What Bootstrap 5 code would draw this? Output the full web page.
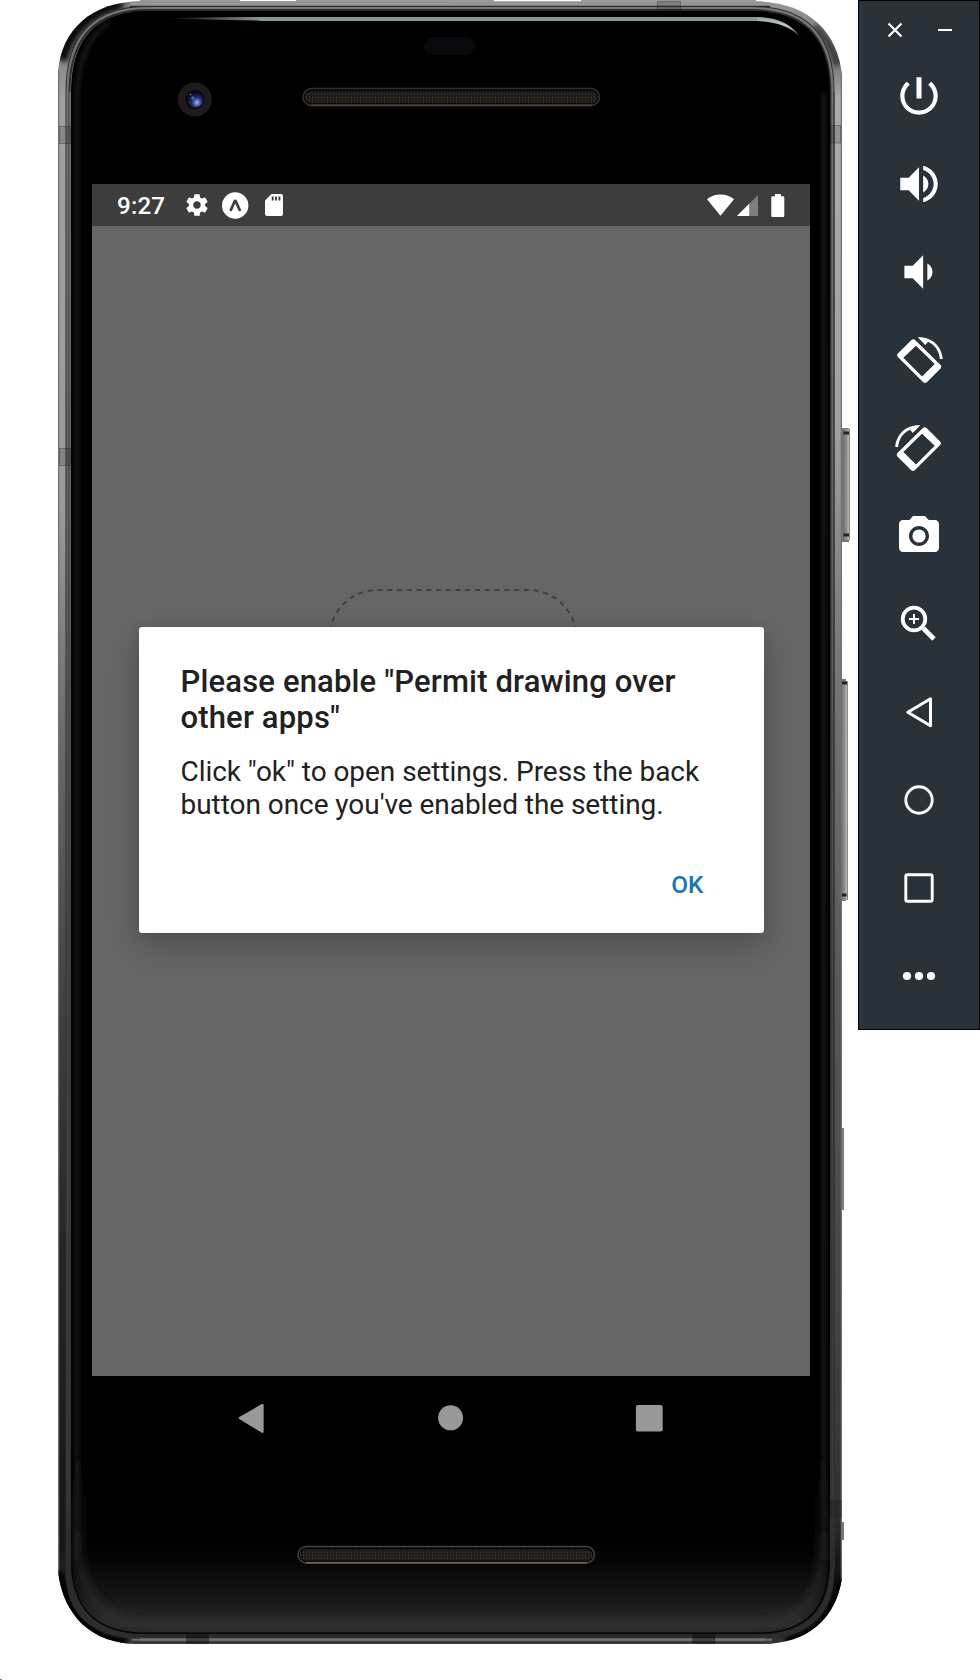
<!DOCTYPE html>
<html lang="en">
<head>
<meta charset="utf-8">
<meta name="viewport" content="width=device-width, initial-scale=1">
<title>Android Emulator</title>
<link href="https://cdn.jsdelivr.net/npm/bootstrap@5.3.0/dist/css/bootstrap.min.css" rel="stylesheet">
<style>
  body { font-family: Roboto, "Liberation Sans", sans-serif; background: #fff; width: 980px; height: 1680px; overflow: hidden; }
  svg { display: block; flex: none; }
  .device { width: 858px; height: 1680px; padding: 184px 48px 0 92px; }
  .device-art { z-index: 0; }
  .device-screen { width: 718px; height: 1192px; background: #666; z-index: 1; }
  .status-row { height: 42px; background: #3d3d3d; padding: 0 25px; z-index: 1; }
  .clock { width: 66.5px; font-size: 24.2px; font-weight: 500; line-height: 42px; letter-spacing: .15px; padding-top: 1px; }
  .icon-expo { margin-left: 12px; }
  .icon-sd { margin-left: 16.5px; }
  .icon-signal { margin-left: 3.5px; }
  .icon-battery { margin-left: 12.8px; }
  .drop-outline { left: 228px; top: 400px; }
  .dialog-area { z-index: 2; }
  .permit-dialog { width: 625px; height: 306px; padding: 37px 42px 34px; border-radius: 3px; color: #212121; box-shadow: 0 14px 36px rgba(0,0,0,.22), 0 2px 12px rgba(0,0,0,.1); }
  .permit-dialog h1 { font-size: 31px; line-height: 36.4px; font-weight: 500; margin-bottom: 19px; white-space: nowrap; letter-spacing: .16px; }
  .permit-dialog p { font-size: 28px; line-height: 32.8px; white-space: nowrap; letter-spacing: -.05px; }
  .btn-ok { font-size: 24.4px; line-height: 28px; font-weight: 500; color: #1a73b8; --bs-btn-padding-x: 18px; --bs-btn-padding-y: 0; }
  .nav-row { height: 84px; gap: 143.3px; z-index: 1; }
  .tool-panel { width: 122px; height: 1030px; background: #283238; border: 1px solid #000; }
  .window-row { height: 51px; padding-top: 7px; padding-left: 1px; gap: 30px; }
  .tool { height: 88px; }
</style>
</head>
<body>
<div class="d-flex align-items-start">
  <main class="device position-relative flex-shrink-0">
    <svg class="device-art position-absolute top-0 start-0" width="858" height="1680" viewBox="0 0 858 1680" aria-hidden="true">
      <defs>
        <linearGradient id="rimL" x1="0" y1="0" x2="0" y2="1644" gradientUnits="userSpaceOnUse">
          <stop offset="0" stop-color="#777"/><stop offset=".04" stop-color="#8a8a8a"/><stop offset=".06" stop-color="#a0a0a0"/><stop offset=".31" stop-color="#9a9a9a"/><stop offset=".45" stop-color="#6a6a6a"/><stop offset=".6" stop-color="#444"/><stop offset=".75" stop-color="#272727"/><stop offset=".94" stop-color="#161616"/><stop offset="1" stop-color="#444"/>
        </linearGradient>
        <linearGradient id="rimR" x1="0" y1="0" x2="0" y2="1644" gradientUnits="userSpaceOnUse">
          <stop offset="0" stop-color="#999"/><stop offset=".035" stop-color="#6d6d6d"/><stop offset=".06" stop-color="#aaa"/><stop offset=".25" stop-color="#a2a2a2"/><stop offset=".4" stop-color="#777"/><stop offset=".6" stop-color="#585858"/><stop offset=".8" stop-color="#444"/><stop offset=".92" stop-color="#303030"/><stop offset=".96" stop-color="#101010"/><stop offset="1" stop-color="#333"/>
        </linearGradient>
        <linearGradient id="chin" x1="0" y1="1535" x2="0" y2="1633" gradientUnits="userSpaceOnUse">
          <stop offset="0" stop-color="#000"/><stop offset=".3" stop-color="#060606"/><stop offset=".65" stop-color="#171717"/><stop offset=".92" stop-color="#2b2b2b"/><stop offset="1" stop-color="#1e1e1e"/>
        </linearGradient>
        <linearGradient id="glow" x1="0" y1="1440" x2="0" y2="1628" gradientUnits="userSpaceOnUse">
          <stop offset="0" stop-color="#222" stop-opacity="0"/><stop offset=".6" stop-color="#242424" stop-opacity=".7"/><stop offset="1" stop-color="#303030"/>
        </linearGradient>
        <linearGradient id="fadeIn" x1="165" y1="0" x2="260" y2="0" gradientUnits="userSpaceOnUse">
          <stop offset="0" stop-color="#8b9598" stop-opacity="0"/><stop offset="1" stop-color="#8b9598"/>
        </linearGradient>
        <linearGradient id="tail" x1="0" y1="17" x2="0" y2="38" gradientUnits="userSpaceOnUse">
          <stop offset="0" stop-color="#98a2a4"/><stop offset=".4" stop-color="#c3cccc"/><stop offset="1" stop-color="#444"/>
        </linearGradient>
        <linearGradient id="topBar" x1="0" y1="1" x2="0" y2="12" gradientUnits="userSpaceOnUse">
          <stop offset="0" stop-color="#888"/><stop offset=".3" stop-color="#9b9b9b"/><stop offset=".42" stop-color="#777"/><stop offset=".46" stop-color="#111"/><stop offset=".56" stop-color="#444"/><stop offset=".75" stop-color="#777"/><stop offset=".9" stop-color="#333"/><stop offset="1" stop-color="#000"/>
        </linearGradient>
        <linearGradient id="bottomBar" x1="0" y1="1633" x2="0" y2="1644" gradientUnits="userSpaceOnUse">
          <stop offset="0" stop-color="#000"/><stop offset=".12" stop-color="#2a2a2a"/><stop offset=".35" stop-color="#222"/><stop offset=".45" stop-color="#777"/><stop offset=".65" stop-color="#666"/><stop offset=".8" stop-color="#333"/><stop offset="1" stop-color="#444"/>
        </linearGradient>
        <linearGradient id="line" x1="0" y1="0" x2="0" y2="1644" gradientUnits="userSpaceOnUse">
          <stop offset="0" stop-color="#777"/><stop offset=".3" stop-color="#666"/><stop offset=".6" stop-color="#454545"/><stop offset=".9" stop-color="#3a3a3a"/><stop offset="1" stop-color="#1a1a1a"/>
        </linearGradient>
        <linearGradient id="key" x1="0" y1="0" x2="1" y2="0">
          <stop offset="0" stop-color="#666"/><stop offset=".3" stop-color="#858585"/><stop offset=".6" stop-color="#8e8e8e"/><stop offset=".7" stop-color="#bbb"/><stop offset=".88" stop-color="#aaa"/><stop offset="1" stop-color="#555"/>
        </linearGradient>
        <pattern id="mesh" width="3" height="3" patternUnits="userSpaceOnUse">
          <rect width="3" height="3" fill="#1a1815"/><rect width="1" height="2" fill="#39342e"/><rect x="1.5" y="1.5" width="1" height="1" fill="#302c28"/>
        </pattern>
        <radialGradient id="lens" cx=".62" cy=".68" r=".62">
          <stop offset="0" stop-color="#a9b8ee"/><stop offset=".25" stop-color="#5a6fbf"/><stop offset=".5" stop-color="#1f2c68"/><stop offset="1" stop-color="#080a18"/>
        </radialGradient>
        <clipPath id="face"><path d="M71 1560V92Q71 11 148 11H752Q830 11 830 92V1560Q830 1634 758 1634H145Q71 1634 71 1560Z"/></clipPath>
        <clipPath id="body"><path d="M58 1571V72C61 30 92 1.500 140 1.500H756C806 1.500 838 30 842 76V1578C836 1618 808 1644 762 1644H138C92 1644 63 1616 58 1571Z"/></clipPath>
        <filter id="soft" x="-10%" y="-10%" width="120%" height="120%"><feGaussianBlur stdDeviation="2.500"/></filter>
        <filter id="softer" x="-10%" y="-10%" width="120%" height="120%"><feGaussianBlur stdDeviation="5"/></filter>
      </defs>

      <!-- side keys -->
      <rect x="841" y="428" width="8" height="114" fill="#777"/>
      <rect x="843" y="429" width="7" height="111" fill="url(#key)"/>
      <path d="M843.500 433h5.500M843.500 535h5.500" stroke="#222" stroke-width="3"/>
      <rect x="841" y="679" width="5" height="222" fill="#777"/>
      <rect x="841" y="681" width="7" height="219" fill="url(#key)"/>
      <path d="M841.500 683h5.500M841.500 895h5" stroke="#222" stroke-width="3"/>
      <rect x="841" y="1128" width="3" height="82" fill="#808080"/>
      <rect x="841" y="1522" width="3" height="18" fill="#777"/>
      <path d="M140 .500H240M296 .500H494M581 .500H756" stroke="#999" stroke-width="2"/>

      <!-- metal rim -->
      <g clip-path="url(#body)">
        <rect x="50" width="400" height="1650" fill="url(#rimL)"/>
        <rect x="450" width="400" height="1650" fill="url(#rimR)"/>
        <rect x="130" y="1" width="640" height="11" fill="url(#topBar)"/>
        <rect x="132" y="1633" width="640" height="11" fill="url(#bottomBar)"/>
        <path d="M58.500 70V1575M841.500 70V1580" stroke="#707070" stroke-width="1.500"/>
        <path d="M60 60C68 28 92 8 122 2" fill="none" stroke="#0a0a0a" stroke-width="15" filter="url(#soft)"/>
        <path d="M60 1572C64 1614 94 1640 128 1642M842 1580C836 1616 812 1636 786 1642" fill="none" stroke="#000" stroke-width="10" filter="url(#soft)"/>
        <path d="M815 26Q832 43 838 66" fill="none" stroke="#333" stroke-width="6" filter="url(#soft)"/>
        <path d="M68 1570V92Q68 8.500 148 8.500H752Q832 8.500 832 92V1568Q832 1636.500 758 1636.500H145Q68 1636.500 68 1570Z" fill="none" stroke="#2c2c2c" stroke-width="5"/>
        <path d="M67.500 1565V92Q67.500 8 148 8H752Q832.500 8 832.500 92V1565" fill="none" stroke="url(#line)" stroke-width="2.200"/>
        <path d="M834 92V1568M830.500 92V1560" stroke="#333" stroke-width="1"/>
        <path d="M70 92V1560" stroke="url(#line)" stroke-width="1.500"/>
        <path d="M140 1639.500H765" stroke="#747474" stroke-width="2.500"/>
      </g>

      <!-- glass face -->
      <path d="M71 1560V92Q71 11 148 11H752Q830 11 830 92V1560Q830 1634 758 1634H145Q71 1634 71 1560Z" fill="#000"/>
      <g clip-path="url(#face)">
        <rect x="70" y="1535" width="762" height="100" fill="url(#chin)"/>
        <path d="M77 1560V92Q80 40 110 22M824 92V1560" fill="none" stroke="#1c1c1c" stroke-width="4" filter="url(#soft)"/>
        <path d="M78 1440V1545C80 1600 110 1626 150 1627H752C800 1626 822 1600 823 1545V1440" fill="none" stroke="url(#glow)" stroke-width="9" filter="url(#softer)"/>
        <path d="M71 1560Q71 1633.500 145 1633.500H758Q829.500 1633.500 829.500 1560" fill="none" stroke="#050505" stroke-width="2"/>
      </g>
      <path d="M165 18.500Q200 17 260 17V20.500Q200 19.500 165 18.500Z" fill="url(#fadeIn)"/>
      <rect x="259" y="17" width="499" height="4" fill="#8b9598"/>
      <path d="M757 17Q786 17 800 36.500Q785 22 757 21Z" fill="url(#tail)"/>

      <!-- antenna bands -->
      <g fill="#000" fill-opacity=".14" stroke="#222" stroke-opacity=".35">
        <rect x="59.500" y="126.500" width="11" height="17"/>
        <rect x="59.500" y="448.500" width="11" height="17"/>
        <rect x="830.500" y="125.500" width="10" height="17.500"/>
        <rect x="830.500" y="1500.500" width="11" height="17"/>
        <rect x="657.500" y="1.500" width="23" height="9"/>
        <rect x="186.500" y="1634.500" width="22.500" height="9" fill-opacity=".4"/>
        <rect x="692.500" y="1634.500" width="22.500" height="9" fill-opacity=".4"/>
      </g>

      <!-- sensor, camera, speakers -->
      <rect x="424" y="37" width="51.500" height="18" rx="9" fill="#08090d"/>
      <circle cx="194.800" cy="99.500" r="17" fill="#1d1b1b"/>
      <circle cx="194.800" cy="99.500" r="9.500" fill="#05060c"/>
      <circle cx="195" cy="99.500" r="8.300" fill="url(#lens)"/>
      <circle cx="192.800" cy="98" r="1.600" fill="#4f68c8"/>
      <circle cx="190.500" cy="94.500" r=".8" fill="#7d8fd0"/>
      <rect x="303" y="88.500" width="296.500" height="17" rx="8.500" fill="#0b0a09" stroke="#353230" stroke-width="1.500"/>
      <rect x="305" y="91.500" width="292.500" height="11.500" rx="5.500" fill="url(#mesh)"/>
      <path d="M311 105.300H592" stroke="#4f4b49" stroke-width="1.400"/>
      <rect x="298" y="1546.500" width="296.500" height="16.500" rx="8.300" fill="#0b0a09" stroke="#45423f" stroke-width="1.500"/>
      <rect x="300" y="1549.500" width="292.500" height="11" rx="5.500" fill="url(#mesh)"/>
      <path d="M306 1562.800H587" stroke="#6b6866" stroke-width="1.400"/>
      <rect y="1679" width="2" height="1" fill="#777"/>
    </svg>

    <section class="device-screen position-relative d-flex flex-column">
      <header class="status-row d-flex align-items-center text-white">
        <span class="clock">9:27</span>
        <svg width="26" height="26" viewBox="0 0 24 24" fill="#fff"><path d="M19.430 12.980c.04-.32.07-.64.07-.98s-.03-.66-.07-.98l2.110-1.650c.19-.15.24-.42.12-.64l-2-3.460c-.12-.22-.39-.3-.61-.22l-2.490 1c-.52-.4-1.080-.73-1.690-.98l-.38-2.650C14.460 2.180 14.250 2 14 2h-4c-.25 0-.46.18-.49.42l-.38 2.650c-.61.25-1.170.59-1.690.98l-2.490-1c-.23-.09-.49 0-.61.22l-2 3.460c-.13.22-.07.49.12.64l2.110 1.650c-.04.32-.07.65-.07.98s.03.66.07.98l-2.110 1.650c-.19.15-.24.42-.12.64l2 3.460c.12.22.39.3.61.22l2.490-1c.52.4 1.080.73 1.690.98l.38 2.650c.03.24.24.42.49.42h4c.25 0 .46-.18.49-.42l.38-2.650c.61-.25 1.170-.59 1.690-.98l2.490 1c.23.09.49 0 .61-.22l2-3.460c.12-.22.07-.49-.12-.64l-2.110-1.650zM12 15.500c-1.930 0-3.500-1.570-3.500-3.500s1.570-3.500 3.500-3.500 3.500 1.570 3.500 3.500-1.570 3.500-3.500 3.500z"/></svg>
        <svg class="icon-expo" width="27" height="27" viewBox="0 0 27 27"><circle cx="13.200" cy="13.500" r="13.200" fill="#fff"/><path d="M7.300 18.200L11.500 8.600Q13.200 6.300 14.900 8.600L19.300 18.200Q18 20 16.600 18.700L13.200 11.500L10 18.700Q8.700 20 7.300 18.200Z" fill="#3d3d3d"/></svg>
        <svg class="icon-sd" width="18" height="22" viewBox="0 0 18 22"><path d="M6.500 0H16Q18 0 18 2V20Q18 22 16 22H2Q0 22 0 20V6.500Z" fill="#fff"/><path d="M7.700 2.500v4M11 2.500v4M14.400 2.500v4" stroke="#3d3d3d" stroke-width="1.900"/></svg>
        <svg class="ms-auto" width="27" height="22" viewBox="0 0 27 22"><path d="M13.500 21.700L0 5.200Q5.500.5 13.500.5T27 5.200Z" fill="#fff"/></svg>
        <svg class="icon-signal" width="21" height="21" viewBox="0 0 21 21"><path d="M21 0V21H0Z" fill="#7d7d7d"/><path d="M12.200 8.800V21H0Z" fill="#fff"/></svg>
        <svg class="icon-battery" width="14" height="23" viewBox="0 0 14 23"><path d="M4 0H10V2.300H12.200Q13.300 2.300 13.300 3.400V21.800Q13.300 23 12.200 23H1.400Q.3 23 .3 21.800V3.400Q.3 2.300 1.400 2.300H4Z" fill="#fff"/></svg>
      </header>

      <svg class="drop-outline position-absolute" width="262" height="60" viewBox="320 584 262 60" fill="none" stroke="#404040" stroke-width="2" stroke-dasharray="5 4.750">
        <path d="M377.500 590H528.500A48 48 0 0 1 576.500 638"/>
        <path d="M372.700 590.200A48 48 0 0 0 329.500 638"/>
      </svg>

      <div class="dialog-area position-absolute top-0 start-0 w-100 h-100 d-flex align-items-center justify-content-center">
        <div class="permit-dialog bg-white d-flex flex-column" role="dialog">
          <h1>Please enable "Permit drawing over<br>other apps"</h1>
          <p class="mb-0">Click "ok" to open settings. Press the back<br>button once you've enabled the setting.</p>
          <div class="d-flex justify-content-end mt-auto">
            <button type="button" class="btn btn-ok border-0">OK</button>
          </div>
        </div>
      </div>
    </section>

    <nav class="nav-row position-relative d-flex align-items-center justify-content-center" aria-label="System navigation">
      <svg width="56" height="56" viewBox="0 0 56 56"><path d="M15.900 28L38.400 15.200V41.800Z" fill="#999" stroke="#999" stroke-width="2.500" stroke-linejoin="round"/></svg>
      <svg width="56" height="56" viewBox="0 0 56 56"><circle cx="27.600" cy="27.800" r="12.500" fill="#999"/></svg>
      <svg width="56" height="56" viewBox="0 0 56 56"><rect x="13.900" y="15" width="26.800" height="26.500" rx="2" fill="#999"/></svg>
    </nav>
  </main>

  <aside class="tool-panel flex-shrink-0" aria-label="Emulator controls">
    <div class="window-row d-flex justify-content-center align-items-center">
      <svg width="20" height="20" viewBox="0 0 20 20" stroke="#fff" stroke-width="2.200"><path d="M3.500 3.500L16.500 16.500M16.500 3.500L3.500 16.500"/></svg>
      <svg width="20" height="20" viewBox="0 0 20 20" stroke="#fff" stroke-width="2"><path d="M3 10H17"/></svg>
    </div>
    <div class="tool d-flex align-items-center justify-content-center"><svg width="50" height="50" viewBox="0 0 24 24" fill="#fff"><path d="M13.200 3h-2.400v10.200h2.400V3zm4.630 2.170l-1.420 1.420C17.990 7.860 19 9.810 19 12c0 3.870-3.130 7-7 7s-7-3.130-7-7c0-2.190 1.010-4.140 2.580-5.420L6.170 5.170C4.230 6.820 3 9.260 3 12c0 4.970 4.030 9 9 9s9-4.030 9-9c0-2.740-1.230-5.180-3.170-6.830z"/></svg></div>
    <div class="tool d-flex align-items-center justify-content-center"><svg width="50" height="50" viewBox="0 0 24 24" fill="#fff"><path d="M3 9v6h4l5 5V4L7 9H3zm13.500 3c0-1.770-1.020-3.290-2.500-4.030v8.050c1.480-.73 2.500-2.250 2.500-4.020zM14 3.230v2.060c2.890.86 5 3.540 5 6.710s-2.110 5.850-5 6.710v2.060c4.010-.91 7-4.490 7-8.770s-2.990-7.860-7-8.770z"/></svg></div>
    <div class="tool d-flex align-items-center justify-content-center"><svg width="50" height="50" viewBox="0 0 24 24" fill="#fff"><path d="M18.500 12c0-1.770-1.020-3.290-2.500-4.030v8.050c1.480-.73 2.500-2.250 2.500-4.020zM5 9v6h4l5 5V4L9 9H5z"/></svg></div>
    <div class="tool d-flex align-items-center justify-content-center"><svg width="60" height="60" viewBox="0 0 60 60" fill="#fff"><path fill-rule="evenodd" d="M22.200 10.300Q24.300 8.200 26.400 10.300L51.300 34.700Q53.200 36.700 51.300 38.700L38 52Q36 53.900 34 52L9.100 27.300Q7 25.300 9.100 23.300ZM27 15.700L14.300 27.800L33 46.400L45.700 34Z"/><path d="M28.700 7.300C42 6.300 53 16 53.700 29H50.900C50.200 21 45.500 14.200 39 11.700L36.300 15Z"/></svg></div>
    <div class="tool d-flex align-items-center justify-content-center"><svg width="60" height="60" viewBox="0 0 60 60" fill="#fff"><g transform="matrix(-1 0 0 1 60 0)"><path fill-rule="evenodd" d="M22.200 10.300Q24.300 8.200 26.400 10.300L51.300 34.700Q53.200 36.700 51.300 38.700L38 52Q36 53.900 34 52L9.100 27.300Q7 25.300 9.100 23.300ZM27 15.700L14.300 27.800L33 46.400L45.700 34Z"/><path d="M28.700 7.300C42 6.300 53 16 53.700 29H50.900C50.200 21 45.500 14.200 39 11.700L36.300 15Z"/></g></svg></div>
    <div class="tool d-flex align-items-center justify-content-center"><svg width="48" height="48" viewBox="0 0 24 24" fill="#fff"><circle cx="12" cy="12" r="3.300"/><path d="M9 2L7.170 4H4c-1.100 0-2 .9-2 2v12c0 1.100.9 2 2 2h16c1.100 0 2-.9 2-2V6c0-1.100-.9-2-2-2h-3.170L15 2H9zm3 15c-2.760 0-5-2.240-5-5s2.240-5 5-5 5 2.240 5 5-2.240 5-5 5z"/></svg></div>
    <div class="tool d-flex align-items-center justify-content-center"><svg width="60" height="60" viewBox="0 0 60 60" fill="none" stroke="#fff"><circle cx="25" cy="25" r="11.300" stroke-width="3.800"/><path d="M20 25H30M25 20V30" stroke-width="1.900"/><path d="M33 33L35.500 35.500" stroke-width="3"/><path d="M34.500 34.500L45 45" stroke-width="4.800"/></svg></div>
    <div class="tool d-flex align-items-center justify-content-center"><svg width="60" height="60" viewBox="0 0 60 60" fill="none" stroke="#fff" stroke-width="3" stroke-linejoin="round"><path d="M18.800 30.300L41.500 16.800V43.800Z"/></svg></div>
    <div class="tool d-flex align-items-center justify-content-center"><svg width="60" height="60" viewBox="0 0 60 60" fill="none" stroke="#fff" stroke-width="2.900"><circle cx="30" cy="30" r="13.200"/></svg></div>
    <div class="tool d-flex align-items-center justify-content-center"><svg width="60" height="60" viewBox="0 0 60 60" fill="none" stroke="#fff" stroke-width="2.900"><rect x="16.800" y="16.800" width="26.400" height="26.400" rx="1.500"/></svg></div>
    <div class="tool d-flex align-items-center justify-content-center"><svg width="60" height="60" viewBox="0 0 60 60" fill="#fff"><circle cx="18" cy="30" r="4.100"/><circle cx="30" cy="30" r="4.100"/><circle cx="42" cy="30" r="4.100"/></svg></div>
  </aside>
</div>
<script src="https://cdn.jsdelivr.net/npm/bootstrap@5.3.0/dist/js/bootstrap.bundle.min.js"></script>
</body>
</html>
